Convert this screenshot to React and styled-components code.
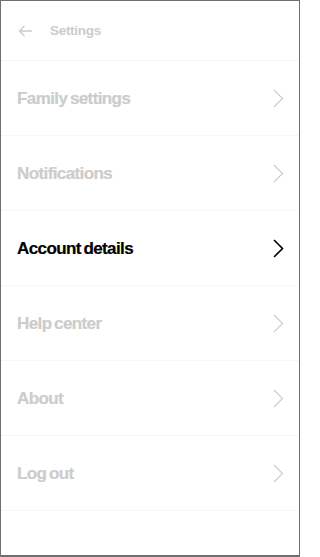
import React from 'react';
import styled, { createGlobalStyle } from 'styled-components';

const GlobalStyle = createGlobalStyle`
  html, body {
    margin: 0;
    padding: 0;
    background: #ffffff;
  }
  * {
    box-sizing: border-box;
  }
`;

const Frame = styled.div`
  width: 300px;
  height: 557px;
  border-left: 1px solid #6f6f6f;
  border-top: 1px solid #6f6f6f;
  border-right: 1px solid #6f6f6f;
  border-bottom: 2px solid #6f6f6f;
  background: #ffffff;
  font-family: 'Liberation Sans', Arial, sans-serif;
  overflow: hidden;
`;

const Header = styled.div`
  display: flex;
  align-items: center;
  height: 60px;
  padding-left: 16px;
  border-bottom: 1px solid #f6f6f6;
`;

const BackButton = styled.button`
  display: flex;
  align-items: center;
  justify-content: center;
  width: 16px;
  height: 16px;
  padding: 0;
  margin-right: 17px;
  border: none;
  background: none;
  color: #cccccc;
`;

const HeaderTitle = styled.div`
  font-size: 13.5px;
  font-weight: 700;
  letter-spacing: -0.3px;
  color: #cccccc;
`;

const List = styled.ul`
  list-style: none;
  margin: 0;
  padding: 0;
`;

const Row = styled.li`
  display: flex;
  align-items: center;
  justify-content: space-between;
  height: 75px;
  padding: 0 15px 0 16px;
  border-bottom: 1px solid #f6f6f6;
  color: ${(p) => (p.$active ? '#000000' : '#cccccc')};
`;

const RowLabel = styled.span`
  font-size: 17px;
  font-weight: 700;
  letter-spacing: -0.6px;
  word-spacing: -1.5px;
  padding-top: 2px;
  -webkit-text-stroke: 0.2px currentColor;
`;

const Chevron = ({ active }) => (
  <svg width="12" height="19" viewBox="0 0 12 19" fill="none">
    <path
      d="M2 1 L10.5 9.5 L2 18"
      stroke="currentColor"
      strokeWidth={active ? 1.6 : 1.2}
    />
  </svg>
);

const items = [
  'Family settings',
  'Notifications',
  'Account details',
  'Help center',
  'About',
  'Log out',
];

export default function App() {
  return (
    <>
      <GlobalStyle />
      <Frame>
        <Header>
          <BackButton aria-label="Back">
            <svg width="15" height="12" viewBox="0 0 15 12" fill="none">
              <path d="M14 6 H1.5 M6.5 1 L1.5 6 L6.5 11" stroke="currentColor" strokeWidth="1.3" />
            </svg>
          </BackButton>
          <HeaderTitle>Settings</HeaderTitle>
        </Header>
        <List>
          {items.map((label) => (
            <Row key={label} $active={label === 'Account details'}>
              <RowLabel>{label}</RowLabel>
              <Chevron active={label === 'Account details'} />
            </Row>
          ))}
        </List>
      </Frame>
    </>
  );
}
